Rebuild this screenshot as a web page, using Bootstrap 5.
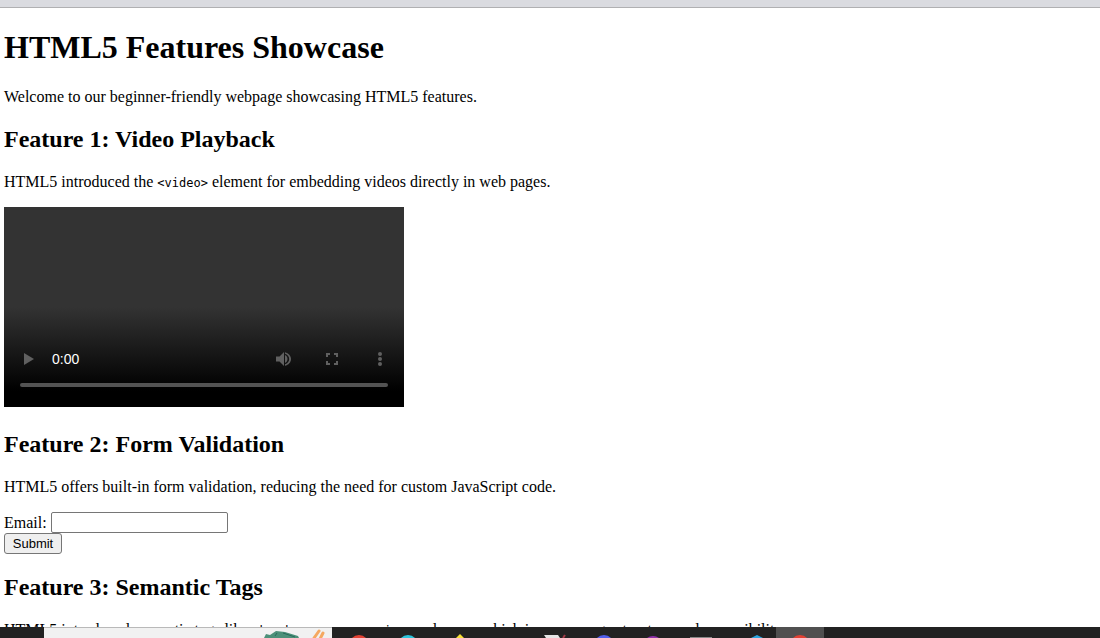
<!DOCTYPE html>
<html lang="en">
<head>
<meta charset="utf-8">
<meta name="viewport" content="width=device-width, initial-scale=1">
<title>HTML5 Features Showcase</title>
<link href="https://cdn.jsdelivr.net/npm/bootstrap@5.3.0/dist/css/bootstrap.min.css" rel="stylesheet">
<style>
  body { font-family: "Liberation Serif", serif; font-size: 16px; line-height: 18px; color: #000; background: #fff; }
  .chrome-edge { height: 8px; background: #dadbe0; border-bottom: 1px solid #b0b0b2; }
  .page { padding: 21px 4px 0; }
  h1 { font-size: 32px; line-height: 37px; font-weight: 700; margin: 0 0 22px; }
  h2 { font-size: 24px; line-height: 28px; font-weight: 700; margin: 19px 0 20px; }
  p { margin: 0 0 16px; }
  code { font-family: "DejaVu Sans Mono", monospace; font-size: 12px; line-height: 1; color: #000; }
  .player { width: 400px; max-width: 100%; height: 200px; padding: 0 16px 20px; color: #fff; background: linear-gradient(#333 50%, #000 92%); font: 14px/20px "Liberation Sans", sans-serif; margin-bottom: 23px; }
  .player button { border: 0; padding: 0; background: none; line-height: 0; color: #606060; }
  .timeline { appearance: none; display: block; width: 100%; height: 4px; margin: 14px 0 0; border-radius: 2px; background: #535353; }
  .timeline::-webkit-slider-thumb { appearance: none; width: 0; height: 0; }
  .email { width: 177px; height: 21px; border: 1px solid #767676; border-radius: 2px; padding: 1px 2px; }
  .submit { height: 21px; width: 58px; font: 13px/15px "Liberation Sans", sans-serif; color: #000; background: #efefef; border: 1px solid #767676; border-radius: 3px; padding: 0; }
  .taskbar { height: 11px; background: #222; }
  .search { width: 288px; margin-left: 44px; background: #f1f1f1; border-top: 1px solid #b9b9b9; }
</style>
</head>
<body class="vh-100 overflow-hidden d-flex flex-column">
<div class="chrome-edge flex-shrink-0"></div>
<main class="page flex-fill overflow-hidden">
  <h1>HTML5 Features Showcase</h1>
  <p>Welcome to our beginner-friendly webpage showcasing HTML5 features.</p>
  <h2>Feature 1: Video Playback</h2>
  <p>HTML5 introduced the <code>&lt;video&gt;</code> element for embedding videos directly in web pages.</p>
  <div class="player d-flex flex-column justify-content-end">
    <div class="d-flex align-items-center">
      <button type="button" aria-label="Play"><svg width="32" height="20" viewBox="0 0 32 20"><path fill="currentColor" d="M4 4v12l10-6z"/></svg></button>
      <span class="me-auto">0:00</span>
      <button type="button" aria-label="Mute"><svg width="48" height="20" viewBox="0 0 48 20"><path fill="currentColor" d="M16 7.500v5h3.500l4.500 4.500V3l-4.500 4.500zM25 6v8c1.500-.7 2.500-2.200 2.500-4S26.500 6.700 25 6zM25 3.200v1.600c2.400.7 4.200 2.700 4.200 5.200s-1.800 4.500-4.200 5.200v1.600c3.500-.8 6-3.500 6-6.800s-2.500-6-6-6.800z"/></svg></button>
      <button type="button" aria-label="Fullscreen"><svg width="48" height="20" viewBox="0 0 48 20"><path fill="none" stroke="currentColor" stroke-width="2" d="M19 8V5h3M26 5h3v3M29 12v3h-3M22 15h-3v-3"/></svg></button>
      <button type="button" aria-label="More options"><svg width="32" height="20" viewBox="0 0 32 20"><g fill="currentColor"><circle cx="24" cy="5" r="2"/><circle cx="24" cy="10" r="2"/><circle cx="24" cy="15" r="2"/></g></svg></button>
    </div>
    <input type="range" class="timeline" value="0" aria-label="Timeline">
  </div>
  <h2>Feature 2: Form Validation</h2>
  <p>HTML5 offers built-in form validation, reducing the need for custom JavaScript code.</p>
  <form>
    <div class="d-flex align-items-center gap-1"><label for="email">Email:</label><input class="email" id="email" type="email" required></div>
    <button class="submit d-block" type="submit">Submit</button>
  </form>
  <h2>Feature 3: Semantic Tags</h2>
  <p class="text-nowrap">HTML5 introduced semantic tags like <code>&lt;header&gt;</code>, <code>&lt;nav&gt;</code>, <code>&lt;main&gt;</code>, and more, which improve page structure and accessibility.</p>
</main>
<footer class="taskbar flex-shrink-0 d-flex">
  <div class="search overflow-hidden d-flex justify-content-end pe-1"><svg width="70" height="10" viewBox="258 628 70 10"><path fill="#4c9079" d="M264 638l2-4 4 1 6-4 9 1 13 4 1 2z"/><path stroke="#286b5c" fill="none" d="M277 633l-2 3m8-3 12 4"/><path stroke="#f5a860" stroke-width="3" stroke-linecap="round" fill="none" d="M314 638l5-7M320 639l3-6"/></svg></div>
  <svg class="flex-fill" height="11" viewBox="332 627 768 11" preserveAspectRatio="xMinYMin slice" aria-hidden="true">
    <path fill="#505050" d="M776 627h48v11h-48z"/>
    <circle cx="359" cy="645" r="10" fill="#e34133"/><circle cx="408" cy="645" r="10" fill="#2cc4dc"/>
    <path fill="#f7df36" d="M456 638l4-4 4 4z"/><path fill="#e5e5e5" d="M544 635h14l2 3h-14z"/><path stroke="#a33b48" stroke-width="2" d="M563 638l2-3"/>
    <circle cx="604" cy="645" r="10" fill="#515eeb"/><circle cx="653" cy="646" r="10" fill="#8f30aa"/>
    <path fill="#888" d="M690 637h22v1h-22z"/><path fill="#2aa5df" d="M751 638l6-3 6 3z"/><circle cx="800" cy="645" r="10" fill="#e34133"/>
  </svg>
</footer>
<script src="https://cdn.jsdelivr.net/npm/bootstrap@5.3.0/dist/js/bootstrap.bundle.min.js"></script>
</body>
</html>
